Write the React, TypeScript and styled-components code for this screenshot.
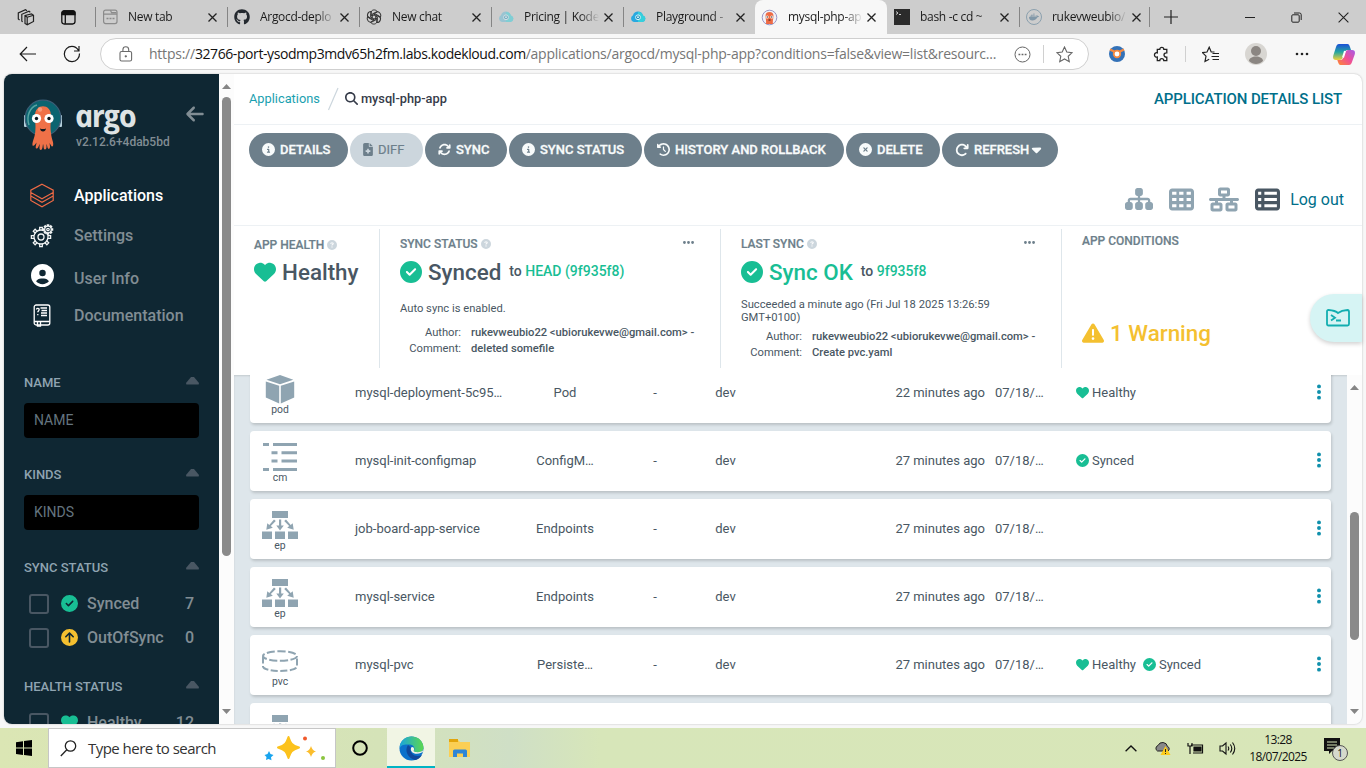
import React from "react";
import styled, { createGlobalStyle, css } from "styled-components";
import {
  FaArrowLeft, FaArrowRotateRight, FaArrowsRotate, FaCaretDown, FaCircleArrowUp, FaCircleCheck,
  FaCircleInfo, FaCircleQuestion, FaCircleXmark, FaClockRotateLeft, FaEllipsis, FaEllipsisVertical,
  FaFileMedical, FaHeart, FaMagnifyingGlass, FaNetworkWired, FaSitemap, FaTableCells, FaTableList,
  FaTriangleExclamation, FaCircleUser, FaGithub, FaDocker,
} from "react-icons/fa6";

const C = {
  green: "#18be94", slate: "#6d7f8b", text: "#495763", icon: "#8fa4b1", navy: "#0f2733",
  teal: "#006f8a", yellow: "#f4c030", list: "#dee6eb", line: "#edf1f4",
};
const UI = `"Open Sans", "Noto Sans", sans-serif`;

const GlobalStyle = createGlobalStyle`
  * { box-sizing: border-box; }
  html, body { margin: 0; padding: 0; overflow: hidden; }
  body { font-family: Roboto, "Liberation Sans", sans-serif; }
  svg { display: block; flex: none; }
`;

const Desktop = styled.div`
  width: 1366px; height: 768px; display: flex; flex-direction: column; background: #f7f7f7; overflow: hidden;
`;

/* ---------- browser chrome ---------- */
const TabStrip = styled.div`
  height: 34px; background: #cdcdcd; display: flex; align-items: center; flex: none;
  font-family: ${UI}; font-size: 12px; color: #1b1b1b;
`;
const StripLead = styled.div`
  width: 96px; height: 34px; padding-left: 17px; display: flex; align-items: center; gap: 26px; flex: none;
`;
const Tab = styled.div<{ $active?: boolean; $sep?: boolean }>`
  position: relative; width: 132px; height: 34px; flex: none; display: flex; align-items: center; padding: 0 11px 0 6px;
  ${(p) => p.$sep && css`
    &::before { content: ""; width: 1px; height: 20px; background: #858585; margin-left: -7px; margin-right: 6px; }`}
  ${(p) => p.$active && css`background: #f7f7f7; border-radius: 8px 8px 0 0; left: -1px;`}
`;
const TabLabel = styled.span`
  width: 75px; margin-left: 10px; white-space: nowrap; overflow: hidden; line-height: 18px;
  letter-spacing: -0.3px;
  mask-image: linear-gradient(to right, #000 56px, transparent 75px);
`;
const Spacer = styled.div` flex: 1; `;
const TabEnd = styled.div`
  display: flex; align-items: center; gap: 14px; margin-left: -3px;
  &::before { content: ""; width: 1px; height: 20px; background: #858585; }
`;
const WindowButtons = styled.div`
  display: flex; align-items: center; gap: 36px; padding-right: 17px;
`;
const AddressRow = styled.div`
  height: 40px; flex: none; display: flex; align-items: center; padding-left: 19px; background: #f7f7f7;
`;
const NavButtons = styled.div` display: flex; gap: 26px; align-items: center; `;
const UrlBar = styled.div`
  width: 989px; height: 32px; margin-left: 19px; border: 1px solid #cfcfcf; border-radius: 16px; background: #fff; flex: none;
  display: flex; align-items: center; padding: 0 15px 0 18px; font-family: ${UI}; font-size: 14px; color: #767676;
`;
const Url = styled.div`
  margin-left: 16px; width: 853px; white-space: nowrap; letter-spacing: -0.23px; line-height: 20px;
  b { color: #111; font-weight: 400; letter-spacing: -0.42px; }
`;
const VLine = styled.div<{ $h: number }>`
  width: 1px; height: ${(p) => p.$h}px; background: #d0d0d0;
`;
const ToolIcons = styled.div` display: flex; align-items: center; margin-left: 6px; `;
const ToolSlot = styled.div<{ $w: number }>` width: ${(p) => p.$w}px; display: flex; justify-content: center; `;

/* ---------- page ---------- */
const Page = styled.div`
  height: 650px; width: 1358px; margin-left: 4px; flex: none; display: flex; background: #fff;
  border-radius: 8px; overflow: hidden; box-shadow: 0 0 2px rgba(0,0,0,.28);
`;
const Sidebar = styled.aside`
  width: 215px; background: ${C.navy}; flex: none; overflow: hidden; color: #818d94; padding: 24px 20px 0;
`;
const Brand = styled.div` display: flex; height: 54px; align-items: flex-start; `;
const BrandText = styled.div` margin-left: 14px; width: 109px; flex: none; `;
const Wordmark = styled.div`
  font-family: "Open Sans", sans-serif; font-style: italic; font-weight: 700; font-size: 31px; line-height: 34px;
  color: #dee3e4; height: 37px; width: 68px; letter-spacing: -1.5px; transform: skewX(12deg); transform-origin: 0 26px;
`;
const Version = styled.div` font-size: 12px; line-height: 15px; font-weight: 500; `;
const Nav = styled.nav` padding-top: 23px; `;
const NavItem = styled.div<{ $active?: boolean; $h: number }>`
  height: ${(p) => p.$h}px; display: flex; align-items: center; font-size: 16px; font-weight: 500;
  color: ${(p) => (p.$active ? "#fff" : "#818d94")};
`;
const NavIcon = styled.div` width: 36px; margin-right: 14px; padding-top: 1px; display: flex; justify-content: center; `;
const FilterHead = styled.div<{ $mt: number }>`
  margin-top: ${(p) => p.$mt}px; height: 16px; display: flex; justify-content: space-between; align-items: center;
  font-size: 13px; font-weight: 500; color: #8fa4b1;
`;
const Caret = styled.i`
  width: 13px; height: 8px; margin-top: -3px; background: #495763; clip-path: polygon(42% 0, 58% 0, 100% 80%, 97% 100%, 3% 100%, 0 80%);
`;
const FilterInput = styled.div`
  margin-top: 13px; height: 35px; border-radius: 4px; background: #000; padding-left: 10px; line-height: 35px;
  font-size: 14px; color: #64747f;
`;
const CheckRow = styled.div<{ $mt: number }>`
  margin-top: ${(p) => p.$mt}px; height: 20px; padding: 0 5px; display: flex; align-items: center; font-size: 16px; font-weight: 500;
  svg { margin-top: -2px; }
`;
const Box = styled.i` width: 20px; height: 20px; border: 2px solid #495763; border-radius: 3px; margin-right: 12px; `;
const CheckName = styled.span` margin-left: 9px; flex: 1; padding-bottom: 2px; `;
const Count = styled.span` padding-bottom: 2px; `;

const ScrollTrack = styled.div`
  width: 15px; flex: none; background: #fcfcfc; display: flex; flex-direction: column; align-items: center; padding: 10px 0;
`;
const Arrow = styled.i<{ $down?: boolean }>`
  width: 9px; height: 5px; background: #858585; flex: none;
  clip-path: ${(p) => (p.$down ? "polygon(0 0,100% 0,50% 100%)" : "polygon(50% 0,100% 100%,0 100%)")};
`;
const Thumb = styled.div<{ $mt: number; $h: number }>`
  width: 9px; height: ${(p) => p.$h}px; margin-top: ${(p) => p.$mt}px; margin-bottom: auto; border-radius: 5px; background: #8a8a8a; flex: none;
`;

const Main = styled.main` flex: 1; min-width: 0; display: flex; flex-direction: column; `;
const TitleBar = styled.div`
  height: 51px; flex: none; border-bottom: 1px solid ${C.line}; display: flex; align-items: center; padding: 0 20px 1px 15px; font-size: 12.8px;
`;
const CrumbLink = styled.span` color: #1a9fb0; `;
const Crumb = styled.span` color: #363c4a; font-weight: 500; margin-left: 3px; `;
const PageTitle = styled.span` color: ${C.teal}; font-size: 15px; font-weight: 500; margin-left: auto; letter-spacing: -0.12px; `;
const Actions = styled.div` height: 50px; padding: 8px 15px; display: flex; gap: 2px; flex: none; `;
const ActionButton = styled.button<{ $w: number; $disabled?: boolean }>`
  width: ${(p) => p.$w}px; height: 34px; border: 0; border-radius: 17px; padding: 0 0 1px 13px; display: flex; align-items: center; gap: 5px;
  font-family: inherit; font-size: 13px; font-weight: ${(p) => (p.$disabled ? 400 : 500)}; white-space: nowrap;
  background: ${(p) => (p.$disabled ? "#ccd6dd" : C.slate)}; color: ${(p) => (p.$disabled ? C.slate : "#f8fbfb")};
  -webkit-text-stroke: ${(p) => (p.$disabled ? "0.2px" : "0.3px")};
`;
const Views = styled.div`
  height: 51px; flex: none; border-bottom: 1px solid ${C.line}; display: flex; align-items: center; justify-content: flex-end;
  padding: 0 18px 2px 0; color: ${C.icon};
`;
const LogOut = styled.span` color: ${C.teal}; font-size: 16px; margin-left: 10px; `;

const StatusPanel = styled.div` height: 149px; flex: none; display: flex; padding-top: 3px; color: ${C.text}; `;
const StatusItem = styled.section<{ $w: number; $last?: boolean }>`
  width: ${(p) => p.$w}px; height: 139px; padding-left: 20px; flex: none;
  border-right: ${(p) => (p.$last ? "0" : "1px solid #dee6eb")};
`;
const StatusHead = styled.div<{ $mt: number }>`
  margin-top: ${(p) => p.$mt}px; height: 16px; display: flex; align-items: center; font-size: 12px; font-weight: 500; color: ${C.slate};
  -webkit-text-stroke: .2px;
  .help { color: #ccd6dd; margin-left: 3px; }
  .more { margin: -3px 25px 0 auto; }
`;
const StatusValue = styled.div<{ $color?: string; $mt: number }>`
  margin-top: ${(p) => p.$mt}px; height: 28px; display: flex; align-items: center; font-size: 22.4px; font-weight: 500;
  color: ${(p) => p.$color || C.text}; white-space: nowrap; gap: 6px;
`;
const Revision = styled.span`
  font-size: 14px; color: ${C.text}; margin: -2px 0 0 2px;
  em { font-style: normal; color: ${C.green}; }
`;
const Note = styled.div<{ $mt: number }>`
  margin-top: ${(p) => p.$mt}px; font-size: 11.2px; line-height: 13px; width: 270px;
`;
const Meta = styled.dl<{ $mt: number }>`
  margin: ${(p) => p.$mt}px 0 0; display: grid; grid-template-columns: 61px 1fr; column-gap: 10px; font-size: 11.2px; line-height: 16px; white-space: nowrap;
  dt { text-align: right; } dd { margin: 0; font-weight: 500; }
`;
const Warning = styled.div`
  margin-top: 69px; height: 30px; display: flex; align-items: center; gap: 6px; font-size: 22.4px; font-weight: 500; color: ${C.yellow};
`;

const ListArea = styled.div` flex: 1; min-height: 0; display: flex; background: ${C.list}; box-shadow: inset 0 1px 2px rgba(0,0,0,.12); overflow: hidden; `;
const Rows = styled.div` flex: 1; margin-top: -12px; padding: 0 16px; display: flex; flex-direction: column; gap: 8px; `;
const Row = styled.div`
  height: 60px; flex: none; border-radius: 4px; background: #fff; box-shadow: 1px 2px 3px rgba(0,0,0,.16);
  display: grid; grid-template-columns: 60px 45px 165px 90px 90px 51px 234px 91px 217px 1fr; align-items: center;
  font-size: 13px; color: ${C.text}; white-space: nowrap; padding-bottom: 2px;
`;
const KindIcon = styled.div`
  display: flex; flex-direction: column; align-items: center; font-size: 10.4px; line-height: 12px;
  padding-top: 12px; grid-column: 1; align-self: start;
`;
const KindDrawing = styled.div` height: 28px; display: flex; align-items: center; margin-bottom: 1px; `;
const Cell = styled.div<{ $col: number; $align?: string }>`
  grid-column: ${(p) => p.$col}; text-align: ${(p) => p.$align || "left"};
`;
const DateCell = styled(Cell)` padding-left: 10px; `;
const StatusCell = styled(Cell)` display: flex; align-items: center; svg { margin-right: 3px; } span { margin-right: 7px; } `;
const Kebab = styled.div` display: flex; color: #1090ac; margin-left: 16.5px; margin-top: -1px; `;
const Terminal = styled.div`
  position: absolute; left: 1310px; top: 294px; width: 52px; height: 48px; border-radius: 24px 0 0 24px; background: #d6f4f4;
  box-shadow: 0 2px 4px rgba(0,0,0,.18); display: flex; align-items: center; padding-left: 16px;
`;

/* ---------- taskbar ---------- */
const Taskbar = styled.footer`
  height: 40px; margin-top: auto; display: flex; align-items: center; flex: none; font-family: ${UI};
  background: linear-gradient(90deg, #dbe6b4 0, #d5e3b8 380px, #cfdfc6 510px, #d7e6b9 600px, #d8e6b8 1366px);
`;
const Start = styled.div` width: 48px; display: flex; justify-content: center; `;
const Search = styled.div`
  width: 288px; height: 40px; background: #fff; border: 1px solid #c6c6c6; display: flex; align-items: center; padding: 0 9px 0 11px;
  font-size: 15px; letter-spacing: -.53px; color: #333; span { margin-left: 11px; flex: 1; }
`;
const TaskIcon = styled.div<{ $active?: boolean; $w: number }>`
  width: ${(p) => p.$w}px; height: 40px; display: flex; align-items: center; justify-content: center;
  ${(p) => p.$active && css`background: #f1f5e4; box-shadow: inset 0 -2px 0 #00b4c4; margin-left: 3px;`}
`;
const Tray = styled.div` margin-left: auto; display: flex; align-items: center; padding-right: 23px; `;
const Clock = styled.div`
  width: 66px; margin-left: 9px; text-align: center; font-size: 12px; line-height: 17px; letter-spacing: -.62px; color: #111;
`;

/* ---------- drawings ---------- */
const Close = ({ s = 9, w = 1.3 }: { s?: number; w?: number }) => (
  <svg width={s} height={s} viewBox="0 0 9 9" stroke="#222" strokeWidth={w}><path d="M.5.5l8 8M8.5.5l-8 8" /></svg>
);
const Workspaces = () => (
  <svg width="18" height="17" viewBox="0 0 18 17" fill="none" stroke="#222" strokeWidth="1.2">
    <path d="M8 6.500l6.500-1.700 2 1.500v6.200l-6.300 3.300L8 14.500zM10.200 15.800V8.200L8 6.500M10.200 8.200l6.300-1.900M5.600 13L4.800 12V5.300l7.200-3 1.300 1M2.600 11L1.300 10V4L8.500.8l1.500 1" />
  </svg>
);
const TabActions = () => (
  <svg width="15" height="15" viewBox="0 0 15 15" fill="none" stroke="#111" strokeWidth="1.3">
    <rect x=".8" y="1" width="13.2" height="13" rx="2.4" /><path d="M1 2.800a2 2 0 012-2h9a2 2 0 012 2V4.600H1z" fill="#111" /><path d="M4.300 4v9.800" />
  </svg>
);
const NewTabIcon = () => (
  <svg width="16" height="16" viewBox="0 0 16 16" fill="none" stroke="#8b8b8b" strokeWidth="1.2">
    <rect x="1.600" y="1.200" width="13.400" height="13.400" rx="2" /><path d="M1.600 5.200H15M8.500 1.200l1 2.500h5" /><path d="M4.500 9.500h8" strokeDasharray="2 1" strokeWidth="1.600" />
  </svg>
);
const OpenAI = () => (
  <svg width="16" height="16" viewBox="-8 -8 16 16" fill="none" stroke="#333" strokeWidth="1">
    {[0, 60, 120, 180, 240, 300].map((a) => (
      <path key={a} transform={`rotate(${a})`} d="M-3.300-3.500V.2L0 2.200M-3.300-3.500C-3.300-7.600 1.800-8.200 3.400-5.200L.2-3.300V-1.500" />
    ))}
  </svg>
);
const Cloud = ({ faded }: { faded?: boolean }) => (
  <svg width="16" height="12" viewBox="0 0 16 12" opacity={faded ? 0.5 : 1}>
    <path d="M3.800 11A3.600 3.600 0 013 4.300 5.200 5.200 0 0113 4.400 3.400 3.400 0 0112.600 11z" fill={faded ? "#67bdd8" : "#28a9e0"} />
    <path d="M13 4.400A3.400 3.400 0 0112.600 11H8V1a5 5 0 015 3.400z" fill="#35d0dc" />
    <circle cx="8" cy="6.300" r="2.400" fill="#1587b8" stroke="#d9f5fa" /><circle cx="8" cy="6.300" r="1" fill="#d9f5fa" />
  </svg>
);
const ArgoFavicon = () => (
  <svg width="17" height="17" viewBox="0 0 17 17">
    <circle cx="8.500" cy="8.500" r="7.300" fill="#f3f2f8" stroke="#8d8ac0" strokeWidth=".9" />
    <path d="M4.500 7a4 4 0 018 0c0 3-1 4-.5 8H5c.5-4-.5-5-.5-8z" fill="#ee6b45" />
    <circle cx="6.200" cy="8" r="1.500" fill="#fff" /><circle cx="10.800" cy="8" r="1.500" fill="#fff" />
    <circle cx="6.200" cy="8" r=".7" fill="#222" /><circle cx="10.800" cy="8" r=".7" fill="#222" /><path d="M7.500 11h2" stroke="#222" />
  </svg>
);
const TerminalFavicon = () => (
  <svg width="16" height="16" viewBox="0 0 16 16"><rect width="16" height="16" fill="#2b2b2b" /><path d="M2 2.500l2 1.500-2 1.500M5 5.500h2" stroke="#ddd" fill="none" strokeWidth=".9" /></svg>
);
const DockerFavicon = styled.div`
  width: 16px; height: 16px; border-radius: 50%; border: 1px solid #8ba0ae; color: #8298a8; display: flex; align-items: center; justify-content: center;
`;
const BackArrow = () => (
  <svg width="18" height="16" viewBox="0 0 18 16" fill="none" stroke="#1b1b1b" strokeWidth="1.200"><path d="M17 8H1.500M8 1L1.200 8 8 15" /></svg>
);
const Reload = () => (
  <svg width="18" height="18" viewBox="0 0 18 18" fill="none" stroke="#1b1b1b" strokeWidth="1.200"><path d="M16.500 8.500A7.600 7.600 0 119 1.400c3 0 5 1.600 6.500 4M16 1v5h-5" /></svg>
);
const Lock = () => (
  <svg width="14" height="16" viewBox="0 0 14 16" fill="none" stroke="#6b6b6b" strokeWidth="1.100">
    <rect x="1" y="5.500" width="11.600" height="9.500" rx="1.600" /><path d="M3.900 5.500V3.700a2.900 2.900 0 015.800 0v1.800" /><circle cx="6.800" cy="10.300" r=".6" fill="#555" />
  </svg>
);
const STAR = "M8.500 1l2.300 5 5.400.6-4 3.700 1.100 5.400-4.800-2.700-4.800 2.700 1.100-5.400-4-3.700 5.400-.6z";
const Logo = () => (
  <svg width="38" height="53" viewBox="0 0 38 53">
    <rect x="0" y="17" width="3" height="12" rx="1" fill="#b5d0dc" /><rect x="35" y="17" width="3" height="12" rx="1" fill="#b5d0dc" />
    <circle cx="19" cy="20" r="17.800" fill="#0b6470" stroke="#3b5d76" strokeWidth="1.200" />
    <path d="M5 27C2 18 6 9 13 7" fill="none" stroke="#56a3a2" strokeWidth="1.500" />
    <path d="M11 18C10.500 5 27.500 5 27 18c0 7-1 9 0 17 .6 7 3 9 2 13-1.500 1.500-2-1-3.500-3 .5 3 1 5-.5 6-2-.5-1.500-3-2.500-5 0 3 .5 5-1.500 5.500C19 51 20 48 19 46c-.5 3-.5 5.500-2 6-2.500-.5-1-4-1.500-6-1 2.500-1.500 5-3.500 4.500-1-1.500.5-4 .5-6-1.500 2-2.500 4-4 3-.5-4 2-7 2.700-13 .8-8-.2-9.500-.2-16.500z" fill="#ef7148" />
    <circle cx="16" cy="11.500" r="2.200" fill="#f79a7b" />
    <circle cx="12.500" cy="20.500" r="4.600" fill="#fff" /><circle cx="25" cy="20.500" r="4.600" fill="#fff" />
    <circle cx="12.500" cy="20.500" r="1.700" fill="#101a20" /><circle cx="25" cy="20.500" r="1.700" fill="#101a20" />
    <path d="M16 30.500q3 1 6 0-.5 3-3 3t-3-3z" fill="#101a20" />
  </svg>
);
const Layers = () => (
  <svg width="24" height="25" viewBox="0 0 24 25" fill="none" stroke="#ef6a45" strokeWidth="1.200">
    <path d="M12 1.200L23.200 7.200V9.500L12 15.800.8 9.500V7.200zM.8 9.500V13L12 19.300 23.200 13V9.500M.8 13v4.500L12 23.800l11.200-6.300V13" />
  </svg>
);
const Gears = () => {
  const gear = (cx: number, cy: number, r: number, hole: number, t: number, n: number) => (
    <g transform={`translate(${cx} ${cy})`}>
      {Array.from({ length: n }, (_, i) => <path key={i} transform={`rotate(${(i * 360) / n})`} d={`M${-t / 2} ${-r}V${-r - t}H${t / 2}V${-r}`} />)}
      <circle r={r} /><circle r={hole} />
    </g>
  );
  return <svg width="24" height="24" viewBox="0 0 24 24" fill="none" stroke="#f2f5f5" strokeWidth="1.300">{gear(11, 13, 7, 3, 2.6, 8)}<g fill={C.navy}>{gear(18, 5.5, 3.3, 1.2, 1.3, 8)}</g></svg>;
};
const Book = () => (
  <svg width="18" height="23" viewBox="0 0 18 23" fill="none" stroke="#fff" strokeWidth="1.300">
    <rect x="1.200" y="1" width="15.600" height="20" rx="2" /><path d="M1.200 17.500h15.600M7.500 4h6.500M8.500 6.500H14M8 9h6M8 11.500h6M4.500 18v4h3v-4" />
    <path d="M3.500 5.500c0-1.800 3-1.500 2.600.3C6 7 4.800 7 4.800 8.300M4.800 10v1.200" />
  </svg>
);
const Cube = () => (
  <svg width="30" height="29" viewBox="0 0 30 29" fill={C.icon}><path d="M15 0l13.300 4.800L15 9.300 1.500 4.800zM.8 6.500l13.400 4.300V28.500L.8 22.500zM15.800 10.800L29.200 6.500v16l-13.400 6z" /></svg>
);
const ConfigMap = () => (
  <svg width="34" height="28" viewBox="0 0 34 28" fill={C.icon}>
    <path d="M0 0h6v3H0zM10 0h24v3H10zM8.500 8.300h6v3h-6zM18.500 8.300H34v3H18.500zM8.500 16.600h6v3h-6zM18.500 16.600H34v3H18.500zM0 25h6v3H0zM10 25h24v3H10z" />
  </svg>
);
const Endpoints = () => (
  <svg width="36" height="28" viewBox="0 0 36 28" fill={C.icon}>
    <path d="M10 0h16v7H10zM0 20.500h10V28H0zM13 20.500h10V28H13zM26 20.500h10V28H26zM17 8.500h2.200v6h2.600L18 19.500l-3.700-5H17zM12 8.500l1.800 1.500-5 5 2 1.700-6.500 2 1-6.500 2 1.700zM24 8.500L22.200 10l5 5-2 1.700 6.500 2-1-6.500-2 1.700z" />
  </svg>
);
const Volume = () => (
  <svg width="38" height="23" viewBox="0 0 38 23" fill="none" stroke={C.icon} strokeWidth="2">
    <ellipse cx="19" cy="6" rx="17" ry="4.800" strokeDasharray="8 2.500" /><path d="M2 6.500v10C3 22.500 35 22.500 36 16.500v-10" strokeDasharray="7 2.500" />
  </svg>
);
const kinds = { pod: Cube, cm: ConfigMap, ep: Endpoints, pvc: Volume };

type Resource = { kind: keyof typeof kinds; name: string; type: string; ago: string; healthy?: boolean; synced?: boolean };
const resources: Resource[] = [
  { kind: "pod", name: "mysql-deployment-5c95…", type: "Pod", ago: "22 minutes ago", healthy: true },
  { kind: "cm", name: "mysql-init-configmap", type: "ConfigM…", ago: "27 minutes ago", synced: true },
  { kind: "ep", name: "job-board-app-service", type: "Endpoints", ago: "27 minutes ago" },
  { kind: "ep", name: "mysql-service", type: "Endpoints", ago: "27 minutes ago" },
  { kind: "pvc", name: "mysql-pvc", type: "Persiste…", ago: "27 minutes ago", healthy: true, synced: true },
  { kind: "ep", name: "", type: "", ago: "" },
];

const tabs = [
  { label: "New tab", icon: <NewTabIcon /> },
  { label: "Argocd-deplo", icon: <FaGithub size={16} color="#24292f" /> },
  { label: "New chat", icon: <OpenAI /> },
  { label: "Pricing | Kode", icon: <Cloud faded /> },
  { label: "Playground -", icon: <Cloud /> },
  { label: "mysql-php-ap", icon: <ArgoFavicon />, active: true },
  { label: "bash -c cd ~", icon: <TerminalFavicon /> },
  { label: "rukevweubio/", icon: <DockerFavicon><FaDocker size={10} /></DockerFavicon> },
];

const Chrome = () => (
  <>
    <TabStrip>
      <StripLead><Workspaces /><TabActions /></StripLead>
      {tabs.map((t, i) => (
        <Tab key={t.label} $active={t.active} $sep={!t.active && i !== 6}>
          {t.icon}<TabLabel>{t.label}</TabLabel><Spacer /><Close />
        </Tab>
      ))}
      <TabEnd>
        <svg width="14" height="14" viewBox="0 0 14 14" stroke="#222" strokeWidth="1.200"><path d="M7 0v14M0 7h14" /></svg>
      </TabEnd>
      <Spacer />
      <WindowButtons>
        <svg width="10" height="10" viewBox="0 0 10 10" stroke="#222"><path d="M0 5.500h10" /></svg>
        <svg width="11" height="11" viewBox="0 0 11 11" stroke="#222" fill="none"><rect x=".8" y="2.800" width="7.400" height="7.400" rx="1" /><path d="M3 1h5.500a1.700 1.700 0 011.700 1.700V8" /></svg>
        <Close s={11} w={0.9} />
      </WindowButtons>
    </TabStrip>
    <AddressRow>
      <NavButtons><BackArrow /><Reload /></NavButtons>
      <UrlBar>
        <Lock />
        <Url>https://<b>32766-port-ysodmp3mdv65h2fm.labs.kodekloud.com</b>/applications/argocd/mysql-php-app?conditions=false&amp;view=list&amp;resourc...</Url>
        <Spacer />
        <svg width="17" height="17" viewBox="0 0 17 17" fill="none" stroke="#666"><circle cx="8.500" cy="8.500" r="7.500" /><path d="M4.500 8.500h8" strokeWidth="1.700" strokeDasharray="1.800 1.300" /></svg>
        <Spacer /><VLine $h={18} /><Spacer />
        <svg width="17" height="17" viewBox="0 0 17 17" fill="none" stroke="#666" strokeWidth="1.100"><path d={STAR} /></svg>
      </UrlBar>
      <ToolIcons>
        <ToolSlot $w={44}><svg width="16" height="16" viewBox="0 0 16 16"><circle cx="8" cy="8" r="8" fill="#3472b8" /><path d="M1 3.500L6 6M15 3.500L10 6" stroke="#f58a42" strokeWidth="2.500" /><circle cx="8" cy="8" r="3.300" fill="#fff" stroke="#f58a42" strokeWidth="1.800" /></svg></ToolSlot>
        <ToolSlot $w={44}><svg width="17" height="17" viewBox="0 0 17 17" fill="none" stroke="#222" strokeWidth="1.300"><path d="M4.300 3.300H6.800a2 2 0 114 0h3V6.800h-.6a2.200 2.200 0 100 4.400h.6v3.500h-3a2 2 0 00-4 0H4.300V11a2.200 2.200 0 110-4.200z" /></svg></ToolSlot>
        <ToolSlot $w={4}><VLine $h={16} /></ToolSlot>
        <ToolSlot $w={46}><svg width="17" height="17" viewBox="0 0 17 17" fill="none" stroke="#222" strokeWidth="1.200"><path d="M12.500 6H9.200L7.200 1.200 5 6l-4.500.6L4 10.200 3 15.500l4.200-2.200M10.500 7.500H17M9.500 10.500H17M10.500 13.500H17" /></svg></ToolSlot>
        <ToolSlot $w={46}><svg width="22" height="22" viewBox="0 0 22 22"><circle cx="11" cy="11" r="11" fill="#d8d6d2" /><circle cx="11" cy="8" r="5" fill="#8b8682" /><path d="M4 18c0-6 14-6 14 0-4 4-10 4-14 0z" fill="#8b8682" /></svg></ToolSlot>
        <ToolSlot $w={46}><svg width="14" height="4" viewBox="0 0 14 4" fill="#222"><circle cx="2" cy="2" r="1.300" /><circle cx="7" cy="2" r="1.300" /><circle cx="12" cy="2" r="1.300" /></svg></ToolSlot>
        <ToolSlot $w={38}><svg width="22" height="21" viewBox="0 0 22 21">
          <defs>
            <linearGradient id="ca" x2="0" y2="1"><stop stopColor="#1b50d8" /><stop offset=".5" stopColor="#24a6a0" /><stop offset="1" stopColor="#f0d03a" /></linearGradient>
            <linearGradient id="cb" x1="1" x2="0" y2="1"><stop stopColor="#a55be8" /><stop offset=".5" stopColor="#ef4f96" /><stop offset="1" stopColor="#ff8b2e" /></linearGradient>
          </defs>
          <path d="M6 0h8.500c1.500 0 2 1.500 2.500 3l1 3h-3.500c-2 0-3 2-3.500 4l-1 3c-.7 2-1.500 3-3.500 3H3c-3 0-3.300-2-2.700-4.500L3 3C3.600 1 4.500 0 6 0z" fill="url(#ca)" />
          <path d="M16 21H7.500C6 21 5.500 19.500 5 18l-.7-2h3.200c2 0 3-2 3.500-4l1-3c.7-2 1.500-3 3.500-3H19c3 0 3.300 2 2.700 4.500L19 18c-.6 2-1.500 3-3 3z" fill="url(#cb)" />
          <path d="M10 13.500l2-6.500" stroke="#fff" strokeWidth="2" />
        </svg></ToolSlot>
      </ToolIcons>
    </AddressRow>
  </>
);

const Side = () => (
  <Sidebar>
    <Brand>
      <Logo />
      <BrandText><Wordmark>argo</Wordmark><Version>v2.12.6+4dab5bd</Version></BrandText>
      <FaArrowLeft size={20} style={{ marginTop: 6 }} color="#818d94" />
    </Brand>
    <Nav>
      <NavItem $active $h={40}><NavIcon><Layers /></NavIcon>Applications</NavItem>
      <NavItem $h={40}><NavIcon><Gears /></NavIcon>Settings</NavItem>
      <NavItem $h={46}><NavIcon><FaCircleUser size={23} color="#fff" style={{ marginTop: -6 }} /></NavIcon>User Info</NavItem>
      <NavItem $h={28}><NavIcon><Book /></NavIcon>Documentation</NavItem>
    </Nav>
    <FilterHead $mt={45}>NAME<Caret /></FilterHead>
    <FilterInput>NAME</FilterInput>
    <FilterHead $mt={28}>KINDS<Caret /></FilterHead>
    <FilterInput>KINDS</FilterInput>
    <FilterHead $mt={29}>SYNC STATUS<Caret /></FilterHead>
    <CheckRow $mt={19}><Box /><FaCircleCheck size={17} color={C.green} /><CheckName>Synced</CheckName><Count>7</Count></CheckRow>
    <CheckRow $mt={14}><Box /><FaCircleArrowUp size={17} color={C.yellow} /><CheckName>OutOfSync</CheckName><Count>0</Count></CheckRow>
    <FilterHead $mt={30}>HEALTH STATUS<Caret /></FilterHead>
    <CheckRow $mt={19}><Box /><FaHeart size={17} color={C.green} /><CheckName>Healthy</CheckName><Count>12</Count></CheckRow>
  </Sidebar>
);

export default function App() {
  return (
    <Desktop>
      <GlobalStyle />
      <Chrome />
      <Page>
        <Side />
        <ScrollTrack><Arrow /><Thumb $mt={8} $h={459} /><Arrow $down /></ScrollTrack>
        <Main>
          <TitleBar>
            <CrumbLink>Applications</CrumbLink>
            <svg width="12" height="24" viewBox="0 0 12 24" stroke="#ccd6dd" strokeWidth="1.200" style={{ margin: "0 6px 0 7px" }}><path d="M1.500 23L11 1" /></svg>
            <FaMagnifyingGlass size={13} color="#363c4a" /><Crumb>mysql-php-app</Crumb>
            <PageTitle>APPLICATION DETAILS LIST</PageTitle>
          </TitleBar>
          <Actions>
            <ActionButton $w={99}><FaCircleInfo size={13} />DETAILS</ActionButton>
            <ActionButton $w={73} $disabled><FaFileMedical size={13} style={{ width: 10 }} />DIFF</ActionButton>
            <ActionButton $w={82}><FaArrowsRotate size={13} />SYNC</ActionButton>
            <ActionButton $w={133}><FaCircleInfo size={13} />SYNC STATUS</ActionButton>
            <ActionButton $w={200}><FaClockRotateLeft size={13} />HISTORY AND ROLLBACK</ActionButton>
            <ActionButton $w={94}><FaCircleXmark size={13} />DELETE</ActionButton>
            <ActionButton $w={116}><FaArrowRotateRight size={14} />REFRESH<FaCaretDown size={15} style={{ marginLeft: -5 }} /></ActionButton>
          </Actions>
          <Views>
            <FaSitemap size={26} style={{ width: 28, marginRight: 16 }} />
            <FaTableCells size={25} style={{ marginRight: 15 }} />
            <FaNetworkWired size={25} style={{ width: 30, marginRight: 16 }} />
            <FaTableList size={25} color={C.text} />
            <LogOut>Log out</LogOut>
          </Views>
          <StatusPanel>
            <StatusItem $w={146}>
              <StatusHead $mt={8}>APP HEALTH<FaCircleQuestion className="help" size={10} /></StatusHead>
              <StatusValue $mt={5}><FaHeart size={22} color={C.green} />Healthy</StatusValue>
            </StatusItem>
            <StatusItem $w={341}>
              <StatusHead $mt={7}>SYNC STATUS<FaCircleQuestion className="help" size={10} /><FaEllipsis className="more" size={13} /></StatusHead>
              <StatusValue $mt={6}><FaCircleCheck size={22} color={C.green} />Synced<Revision>to <em>HEAD (9f935f8)</em></Revision></StatusValue>
              <Note $mt={16}>Auto sync is enabled.</Note>
              <Meta $mt={10}><dt>Author:</dt><dd>rukevweubio22 &lt;ubiorukevwe@gmail.com&gt; -</dd><dt>Comment:</dt><dd>deleted somefile</dd></Meta>
            </StatusItem>
            <StatusItem $w={341}>
              <StatusHead $mt={7}>LAST SYNC<FaCircleQuestion className="help" size={10} /><FaEllipsis className="more" size={13} /></StatusHead>
              <StatusValue $mt={6} $color={C.green}><FaCircleCheck size={22} />Sync OK<Revision>to <em>9f935f8</em></Revision></StatusValue>
              <Note $mt={12}>Succeeded a minute ago (Fri Jul 18 2025 13:26:59 GMT+0100)</Note>
              <Meta $mt={5}><dt>Author:</dt><dd>rukevweubio22 &lt;ubiorukevwe@gmail.com&gt; -</dd><dt>Comment:</dt><dd>Create pvc.yaml</dd></Meta>
            </StatusItem>
            <StatusItem $w={300} $last>
              <StatusHead $mt={4}>APP CONDITIONS</StatusHead>
              <Warning><FaTriangleExclamation size={22} />1 Warning</Warning>
            </StatusItem>
          </StatusPanel>
          <ListArea>
            <Rows>
              {resources.map((r, i) => {
                const Icon = kinds[r.kind];
                return (
                  <Row key={i}>
                    <KindIcon><KindDrawing><Icon /></KindDrawing>{r.name && r.kind}</KindIcon>
                    <Cell $col={3}>{r.name}</Cell>
                    <Cell $col={4} $align="center">{r.type}</Cell>
                    <Cell $col={5} $align="center">{r.name && "-"}</Cell>
                    <Cell $col={6} $align="center">{r.name && "dev"}</Cell>
                    <Cell $col={7} $align="right">{r.ago}</Cell>
                    <DateCell $col={8}>{r.name && "07/18/…"}</DateCell>
                    <StatusCell $col={9}>
                      {r.healthy && <><FaHeart size={13} color={C.green} /><span>Healthy</span></>}
                      {r.synced && <><FaCircleCheck size={13} color={C.green} /><span>Synced</span></>}
                    </StatusCell>
                    <Kebab><FaEllipsisVertical size={18} /></Kebab>
                  </Row>
                );
              })}
            </Rows>
            <ScrollTrack><Arrow /><Thumb $mt={122} $h={128} /><Arrow $down /></ScrollTrack>
          </ListArea>
        </Main>
      </Page>
      <Terminal>
        <svg width="24" height="18" viewBox="0 0 24 18" fill="none" stroke="#12aeb0" strokeWidth="1.800"><path d="M1 2.500Q1 1 2.500 1c3 .2 7 .6 9.500 3C14 2.500 18 1.200 21.500 1 23 1 23 2 23 3v12q0 1.500-1.500 1.500h-19Q1 16.500 1 15zM5 6l4 2.800L5 11.500M10 11.500h5" /></svg>
      </Terminal>
      <Taskbar>
        <Start><svg width="16" height="16" viewBox="0 0 16 16"><path d="M0 2.300L7 1.200V7.600H0zM8 1.100L16 0v7.600H8zM0 8.500h7v6.400L0 13.900zM8 8.500h8V16l-8-1.100z" /></svg></Start>
        <Search>
          <svg width="17" height="17" viewBox="0 0 17 17" fill="none" stroke="#222" strokeWidth="1.300"><circle cx="10.500" cy="6" r="5.200" /><path d="M6.800 9.800L.8 16" /></svg>
          <span>Type here to search</span>
          <svg width="62" height="26" viewBox="0 0 62 26">
            <path d="M24.500 2c2 6 3 8 10.500 10.500-7.500 2.500-8.500 4.500-10.500 10.500-2-6-3-8-10.500-10.500 7.500-2.500 8.500-4.500 10.500-10.500z" fill="#fcc21d" stroke="#fcc21d" strokeWidth="2" strokeLinejoin="round" />
            <path d="M47 11c1 3 2 4.500 5 5.500-3 1-4 2.500-5 5.500-1-3-2-4.500-5-5.500 3-1 4-2.500 5-5.500z" fill="#fbbd2c" />
            <path d="M5 16l1.500 3 3 1-2.500 2.200.5 3-3-1.200-2.500 1L2.500 22 .5 20l3-1z" fill="#18a4ee" /><circle cx="41" cy="3.500" r="2" fill="#f0592b" /><circle cx="59" cy="23" r="2" fill="#8bc53f" />
          </svg>
        </Search>
        <TaskIcon $w={48}><svg width="16" height="16" viewBox="0 0 16 16" fill="none" stroke="#000" strokeWidth="2"><circle cx="8" cy="8" r="6.800" /></svg></TaskIcon>
        <TaskIcon $w={48} $active>
          <svg width="25" height="25" viewBox="0 0 25 25">
            <defs><linearGradient id="e1" x2="1"><stop stopColor="#1aa5dc" /><stop offset="1" stopColor="#5cd84e" /></linearGradient></defs>
            <circle cx="12.500" cy="12.500" r="12" fill="#0c71cb" />
            <path d="M.8 10C3-3 24-3 24.500 12c-.3 5-8 5.500-10 3 2-1.500 1-6-3.500-6.500C5 8 1 9 .8 13z" fill="url(#e1)" />
            <path d="M9 9c-4 6 0 13 7 15 3-.5 5-2 7-5-6 3-13-1-11-7-1-1.500-2-2.500-3-3z" fill="#10499b" />
            <path d="M12 12c-1 3 2 6 6 5.800 3 0 4.500-1.500 5.500-1.500l1.500-3c-2 3.500-9 3.500-10.500 1.700.8-.8.700-2.500 0-3.500-1-1-2.200-.5-2.500.5z" fill="#f1f5e4" />
          </svg>
        </TaskIcon>
        <TaskIcon $w={50}>
          <svg width="22" height="19" viewBox="0 0 22 19"><path d="M0 1h9l2 2h10v15H0z" fill="#fbcf54" /><path d="M0 0h9v3H0z" fill="#e2a50c" /><path d="M4 18v-6q0-1.500 1.500-1.500h11Q18 10.500 18 12v6h-4v-3.500H8V18z" fill="#2f86d6" /></svg>
        </TaskIcon>
        <Tray>
          <svg width="12" height="7" viewBox="0 0 12 7" fill="none" stroke="#111" strokeWidth="1.300"><path d="M.6 6.300L6 1l5.400 5.300" /></svg>
          <svg width="18" height="15" viewBox="0 0 18 15" style={{ marginLeft: 17 }}><path d="M3.500 10A3 3 0 014 4.500a5 5 0 019.500 1A2.500 2.500 0 0114 10z" fill="#888" stroke="#222" /><path d="M11.500 5l5 9h-10z" fill="#fccb1c" /><path d="M11.500 8v3M11.500 12v1" stroke="#222" /></svg>
          <svg width="17" height="13" viewBox="0 0 17 13" style={{ marginLeft: 15 }} fill="none" stroke="#111" strokeWidth="1.200"><path d="M4 3h11.500v8H6M1 1v3h4V1M3 4v8" /><path d="M7 5h7v4H7z" fill="#111" /></svg>
          <svg width="17" height="15" viewBox="0 0 17 15" style={{ marginLeft: 15 }} fill="none" stroke="#111" strokeWidth="1.100"><path d="M1 5h2.500L7 2v11L3.500 10H1zM9 5.500q1.500 2 0 4M11.300 3.500q3 4 0 8M13.500 1.500q4.500 6 0 12" /></svg>
          <Clock>13:28<br />18/07/2025</Clock>
          <svg width="28" height="26" viewBox="0 0 28 26" style={{ marginLeft: 12, marginRight: -8 }}>
            <path d="M1 3h16v13H9l-3 3v-3H1z" fill="#111" /><path d="M4 7h10M4 10h10M4 13h7" stroke="#d8e6b8" />
            <circle cx="17" cy="18" r="7.500" fill="#d5d9cc" stroke="#555" /><text x="17" y="22" fontSize="10" textAnchor="middle" fill="#111">1</text>
          </svg>
        </Tray>
      </Taskbar>
    </Desktop>
  );
}
